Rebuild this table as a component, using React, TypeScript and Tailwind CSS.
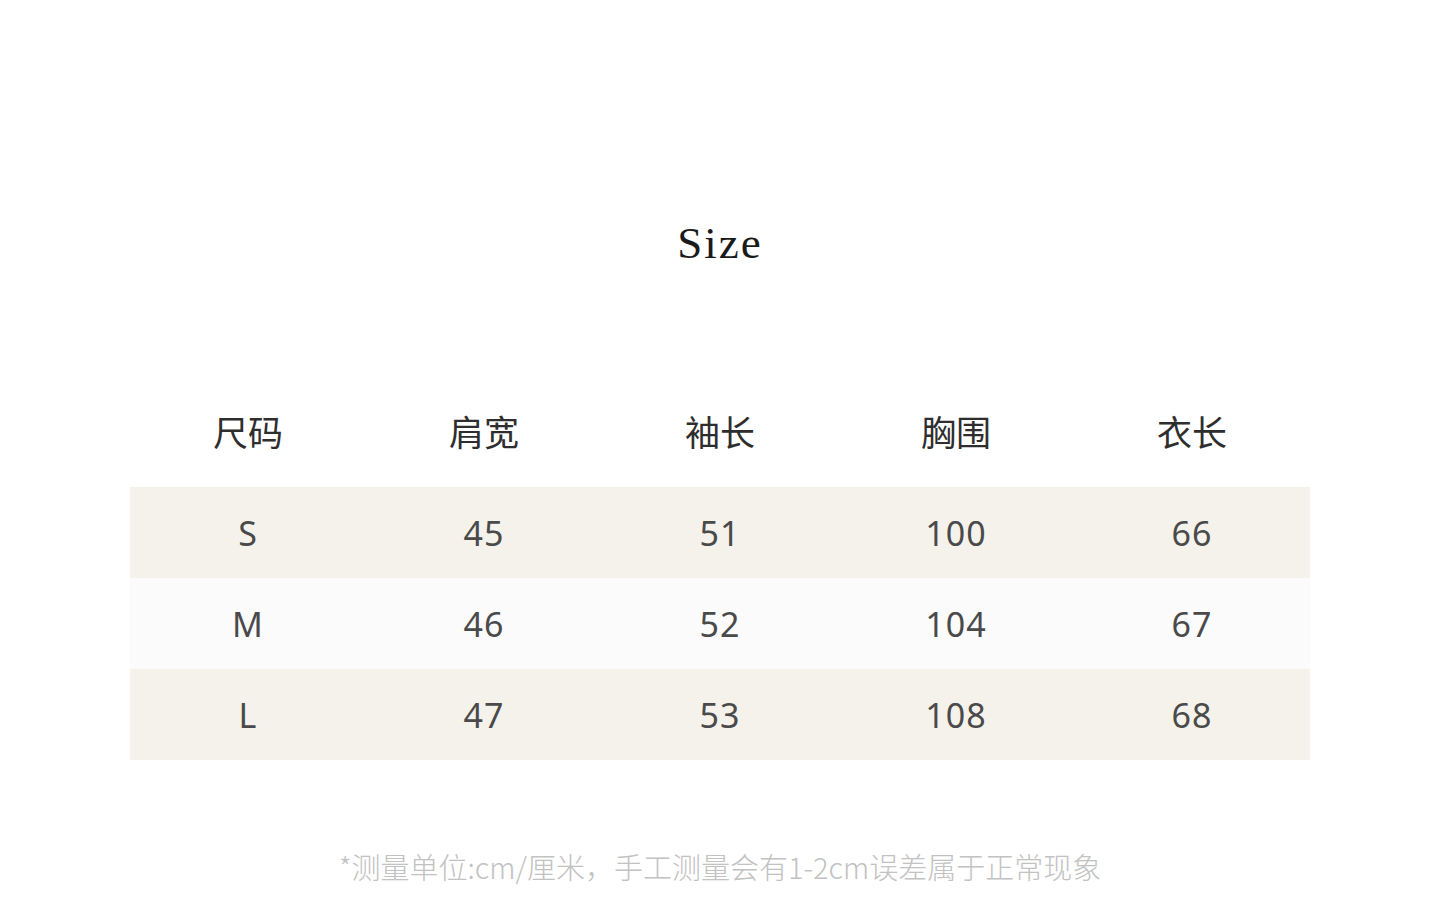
const headers = ["尺码", "肩宽", "袖长", "胸围", "衣长"];

const rows = [
  ["S", "45", "51", "100", "66"],
  ["M", "46", "52", "104", "67"],
  ["L", "47", "53", "108", "68"],
];

export default function App() {
  return (
    <div
      className="min-h-[917px] w-full bg-white pt-[213px]"
      style={{ fontFamily: '"Noto Sans", "Noto Sans CJK SC", sans-serif' }}
    >
      <h1
        className="h-[60px] text-center text-[45px] leading-[60px] tracking-[2px] text-[#1a1a1a]"
        style={{ fontFamily: '"Liberation Serif", serif' }}
      >
        Size
      </h1>

      <div className="mx-[130px] mt-[133px]">
        <div className="mb-[31px] grid h-[50px] grid-cols-5">
          {headers.map((h) => (
            <div
              key={h}
              className="text-center text-[35px] leading-[50px] text-[#2e2e2e]"
              style={{ fontFamily: '"Noto Sans CJK SC", sans-serif' }}
            >
              {h}
            </div>
          ))}
        </div>

        {rows.map((r, i) => (
          <div
            key={r[0]}
            className={`grid h-[91px] grid-cols-5 items-center ${i === 1 ? "bg-[#fbfbfb]" : "bg-[#f5f2ec]"}`}
          >
            {r.map((c, j) => (
              <div
                key={j}
                className="text-center text-[34px] leading-[40px] tracking-[1px] text-[#4a4a4a]"
              >
                {c}
              </div>
            ))}
          </div>
        ))}
      </div>

      <p
        className="mt-[86px] text-center text-[29px] leading-[40px] font-light text-[#c2c2c2]"
        style={{ fontFamily: '"Noto Sans CJK SC", sans-serif' }}
      >
        *测量单位:cm/厘米，手工测量会有1-2cm误差属于正常现象
      </p>
    </div>
  );
}
